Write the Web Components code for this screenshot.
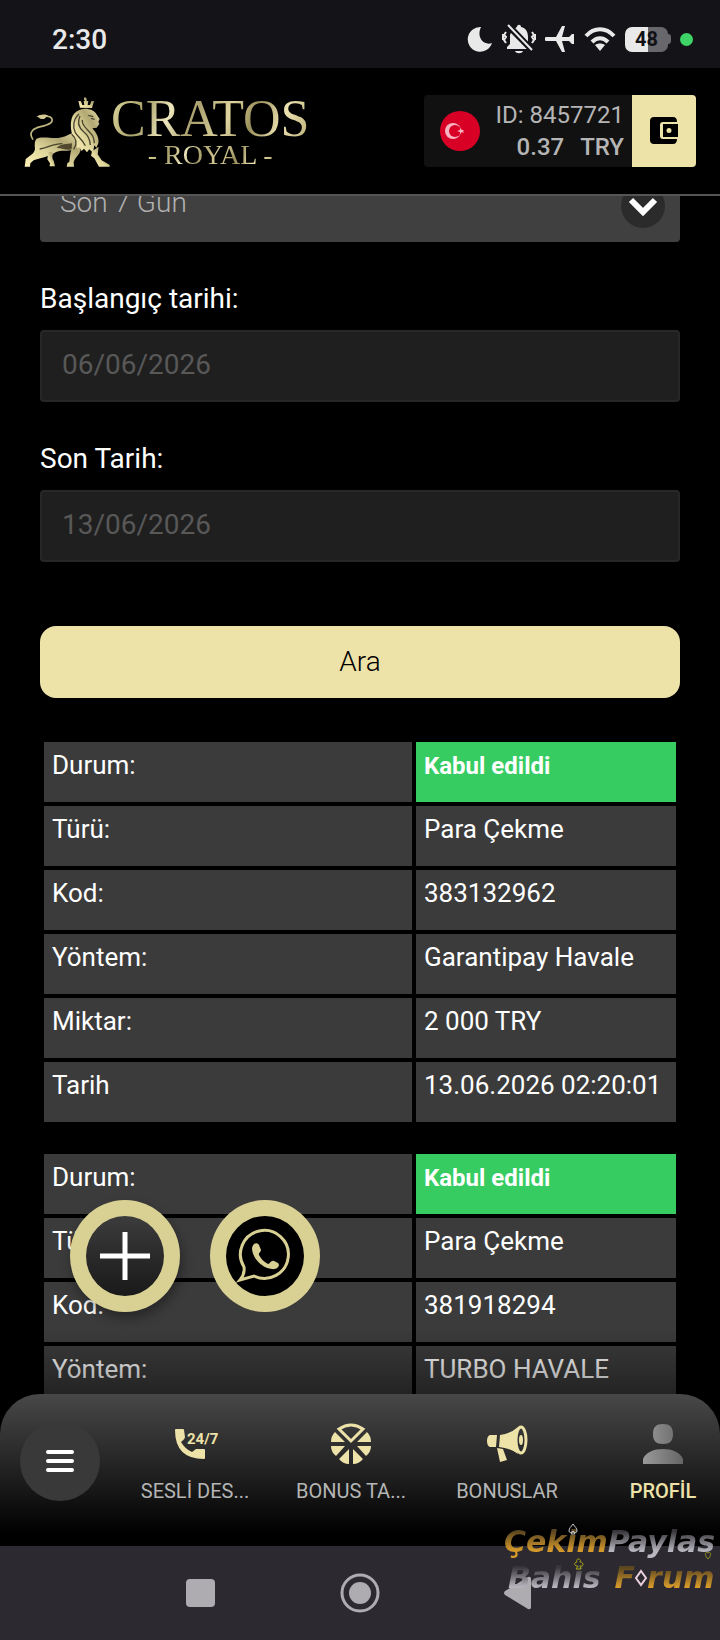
<!DOCTYPE html>
<html lang="tr">
<head>
  <meta charset="utf-8">
  <meta name="viewport" content="width=device-width, initial-scale=1">
  <title>Cratos Royal</title>
  <style>
    body {
      margin: 0;
      background: #000000;
      color: #ffffff;
      font-family: Roboto, "Liberation Sans", sans-serif;
      --gold: #ede2a8;
      --gold-dark: #d9d194;
      --cell: #3b3b3b;
      --green: #36cc62;
      --muted: #b5b5b5;
      --font-nav: 20px;
      --font-small: 24px;
      --font-cell: 26px;
      --font-field: 28px;
    }
  </style>
</head>
<body>
  <app-shell>
    <status-bar slot="top" time="2:30" battery="48"></status-bar>
    <site-header slot="top" user="8457721" amount="0.37" currency="TRY"></site-header>

    <history-filter></history-filter>
    <transaction-card status="Kabul edildi" type="Para Çekme" code="383132962" method="Garantipay Havale" amount="2 000 TRY" date="13.06.2026 02:20:01"></transaction-card>
    <transaction-card status="Kabul edildi" type="Para Çekme" code="381918294" method="TURBO HAVALE" amount="" date=""></transaction-card>

    <floating-actions slot="floating"></floating-actions>

    <bottom-nav slot="bottom">
      <nav-item label="SESLİ DES..." icon="phone"></nav-item>
      <nav-item label="BONUS TA..." icon="wheel"></nav-item>
      <nav-item label="BONUSLAR" icon="horn"></nav-item>
      <nav-item label="PROFİL" icon="user" active></nav-item>
    </bottom-nav>
    <system-nav slot="bottom"></system-nav>
    <forum-mark slot="bottom"></forum-mark>
  </app-shell>

  <script>
    class AppShell extends HTMLElement {
      constructor() {
        super();
        this.attachShadow({ mode: "open" });
      }

      connectedCallback() {
        this.shadowRoot.innerHTML = `
          <style>
            :host {
              display: flex;
              flex-direction: column;
              height: 100vh;
              position: relative;
              overflow: hidden;
            }

            main {
              flex: 1;
              min-height: 0;
              position: relative;
              overflow: hidden;
            }

            /* the list is scrolled a little under the header */
            .content {
              margin-top: -26px;
              padding: 0 40px;
              display: flex;
              flex-direction: column;
              gap: 24px;
            }

            .fade {
              position: absolute;
              left: 0;
              right: 0;
              bottom: 0;
              height: 64px;
              background: linear-gradient(transparent, rgba(0, 0, 0, 0.4));
            }
          </style>
          <slot name="top"></slot>
          <main>
            <div class="content"><slot></slot></div>
            <div class="fade"></div>
            <slot name="floating"></slot>
          </main>
          <slot name="bottom"></slot>
        `;
      }
    }

    class StatusBar extends HTMLElement {
      constructor() {
        super();
        this.attachShadow({ mode: "open" });
      }

      connectedCallback() {
        const time = this.getAttribute("time") || "";
        const battery = this.getAttribute("battery") || "0";

        this.shadowRoot.innerHTML = `
          <style>
            :host {
              display: flex;
              align-items: center;
              justify-content: space-between;
              box-sizing: border-box;
              height: 68px;
              padding: 10px 27px 0 52px;
              background: #141318;
              color: #e9e9ea;
              fill: #e9e9ea;
            }

            time {
              font-size: var(--font-field);
              font-weight: 500;
            }

            .icons {
              display: flex;
              align-items: center;
              gap: 9px;
            }

            svg {
              display: block;
            }

            .battery {
              display: flex;
              align-items: center;
            }

            .level {
              width: 43px;
              height: 25px;
              border-radius: 7px;
              background: linear-gradient(90deg, #e9e9ea 53%, #68676b 53%);
              color: #121116;
              font-size: 20px;
              font-weight: bold;
              line-height: 25px;
              text-align: center;
            }

            .tip {
              width: 3px;
              height: 10px;
              border-radius: 0 4px 4px 0;
              background: #68676b;
            }

            .dot {
              width: 13px;
              height: 13px;
              border-radius: 50%;
              background: #3fd467;
            }
          </style>
          <time>${time}</time>
          <div class="icons">
            <svg width="26" height="26" viewBox="0 0 26 26"><path d="M14 1A12.400 12.400 0 1 0 25 17C17 20 9 12 14 1Z"/></svg>
            <svg width="34" height="30" viewBox="0 0 34 30">
              <path d="M13 5C14 3 15 3 15 3C15 0 19 0 19 3C24 4 26 8 26 13V18L13 5ZM9 9L25 25H5V23L8 20V13C8 11 8 10 9 9ZM13 27H21C20 30 14 30 13 27Z"/>
              <path d="M7 2L30 26" stroke="#141318" stroke-width="6"/>
              <path d="M6 1L30 26M4 8L2 11L4 13L2 16L4 19M1 10V16M30 8L32 11L30 13L32 16L30 19M33 10V16" fill="none" stroke="#e9e9ea" stroke-width="2"/>
            </svg>
            <svg width="30" height="26" viewBox="0 0 30 26"><path d="M1 11H11L17 0H20L17 11H24L27 8H29V18H27L24 15H17L20 26H17L11 15H1C-1 14-1 12 1 11Z"/></svg>
            <svg width="32" height="24" viewBox="0 0 32 24">
              <path d="M2 9C10 0 22 0 30 9M8 15C13 10 19 10 24 15" fill="none" stroke="#e9e9ea" stroke-width="4"/>
              <path d="M11 18C14 16 18 16 21 18L16 24Z"/>
            </svg>
            <div class="battery">
              <div class="level">${battery}</div>
              <div class="tip"></div>
            </div>
            <div class="dot"></div>
          </div>
        `;
      }
    }

    class SiteLogo extends HTMLElement {
      constructor() {
        super();
        this.attachShadow({ mode: "open" });
      }

      connectedCallback() {
        this.shadowRoot.innerHTML = `
          <style>
            :host {
              display: block;
            }

            a {
              display: flex;
              align-items: center;
              text-decoration: none;
              font-family: "Liberation Serif", serif;
              color: #d3c994;
            }

            svg {
              display: block;
            }

            .name {
              display: flex;
              flex-direction: column;
              align-items: center;
            }

            .name span {
              background: linear-gradient(110deg, #ded79d, #a79f68 18%, #eee7bd 30%, #a9a06d 42%, #dfd49f 58%, #998f5b 70%, #eee3b1 84%, #b8ad76);
              -webkit-background-clip: text;
              background-clip: text;
              color: transparent;
            }

            .cratos {
              font-size: 52px;
              line-height: 48px;
            }

            .royal {
              font-size: 28px;
              line-height: 24px;
            }
          </style>
          <a href="#" aria-label="Cratos Royal">
            <svg width="87" height="71" viewBox="15 15 261 213">
              <defs>
                <linearGradient id="coat" x1="0" y1="1" x2="1" y2="0">
                  <stop offset="0" stop-color="#fff2b8"/>
                  <stop offset="0.4" stop-color="#e0d79d"/>
                  <stop offset="0.7" stop-color="#b2a873"/>
                  <stop offset="1" stop-color="#e6dcaa"/>
                </linearGradient>
              </defs>
              <path d="M42 146C27 123 43 112 65 107C91 101 104 94 98 82C92 73 75 75 62 81" fill="none" stroke="#bdb681" stroke-width="5"/>
              <path d="M53 77C62 70 78 68 88 74C78 76 82 84 70 84C62 84 61 78 53 77Z" fill="#d4ca94"/>
              <g fill="url(#coat)">
                <path d="M52 144C68 135 95 143 118 141C138 139 149 130 160 127L190 152L184 180C181 192 167 200 164 214L165 227H143L145 217L151 212C153 200 153 187 157 178C140 181 125 176 111 183C88 199 62 201 44 208L34 217L33 227H17L20 205C30 194 46 190 48 174C48 166 45 153 52 144Z"/>
                <path d="M88 184L106 181C99 191 98 202 104 209L108 226H92L93 217L85 205Z"/>
                <path d="M158 125C152 95 156 66 181 57C202 48 224 58 230 66L242 84L238 92L241 99L233 110L220 112C232 125 241 140 238 157L232 170L226 163L222 185L211 175L204 184L195 173L188 180L183 169L174 171C178 157 162 147 158 125Z"/>
                <path d="M219 181L239 167L236 190L248 208L272 222V227H240L226 202L216 194Z"/>
                <path d="M183 50L178 30L186 31L190 42H196L194 30H198C188 19 205 12 203 30H208L206 42H213L217 31L225 30L219 51Z"/>
              </g>
              <path d="M180 69C163 85 160 108 169 125C176 137 190 145 199 164M183 75C174 94 178 109 194 122C207 132 213 147 214 162M190 87C187 102 203 113 214 126C223 135 226 147 226 157M208 73L223 77M216 82L227 85M62 174C86 171 102 158 130 158M158 130C174 144 176 158 164 175" fill="none" stroke="#48442c" stroke-width="4"/>
              <path d="M113 171C124 158 145 160 159 157L158 175C142 180 128 170 113 171Z" fill="#51492d"/>
            </svg>
            <div class="name">
              <span class="cratos">CRATOS</span>
              <span class="royal">- ROYAL -</span>
            </div>
          </a>
        `;
      }
    }

    class SiteHeader extends HTMLElement {
      constructor() {
        super();
        this.attachShadow({ mode: "open" });
      }

      connectedCallback() {
        const user = this.getAttribute("user") || "";
        const amount = this.getAttribute("amount") || "";
        const currency = this.getAttribute("currency") || "";

        this.shadowRoot.innerHTML = `
          <style>
            :host {
              display: flex;
              align-items: center;
              justify-content: space-between;
              box-sizing: border-box;
              height: 128px;
              padding: 0 24px;
              background: #000000;
              border-bottom: 2px solid #555555;
            }

            .account {
              display: flex;
              align-items: center;
              height: 72px;
              border-radius: 4px;
              overflow: hidden;
              background: #111111;
              color: var(--muted);
              font-size: var(--font-small);
              line-height: 32px;
            }

            .flag {
              margin: 0 16px;
            }

            .balance {
              text-align: right;
              padding-right: 8px;
            }

            .money {
              display: flex;
              justify-content: flex-end;
              gap: 16px;
              font-weight: 500;
            }

            button {
              width: 64px;
              height: 72px;
              padding: 0;
              border: none;
              background: var(--gold);
              display: flex;
              align-items: center;
              justify-content: center;
            }
          </style>
          <site-logo></site-logo>
          <div class="account">
            <svg class="flag" width="40" height="40" viewBox="0 0 40 40">
              <circle cx="20" cy="20" r="20" fill="#d90026"/>
              <circle cx="13" cy="20" r="8" fill="#f6b3c0"/>
              <circle cx="15" cy="20" r="6" fill="#d90026"/>
              <path d="M17 20L20 19L20 17L22 19L24 19L23 20L24 22L22 21L20 23L20 21Z" fill="#f6b3c0"/>
            </svg>
            <div class="balance">
              <div>ID: ${user}</div>
              <div class="money"><span>${amount}</span><span>${currency}</span></div>
            </div>
            <button type="button" aria-label="Cüzdan">
              <svg width="28" height="28" viewBox="0 0 28 28">
                <path d="M4 0H23Q27 0 27 5H13Q10 5 10 8V19Q10 22 13 22H27Q27 27 23 27H4Q0 27 0 23V4Q0 0 4 0Z"/>
                <path fill-rule="evenodd" d="M13 7H28V20H13ZM19 11A2.400 2.400 0 1 0 19 16A2.400 2.400 0 1 0 19 11Z"/>
              </svg>
            </button>
          </div>
        `;
      }
    }

    class HistoryFilter extends HTMLElement {
      constructor() {
        super();
        this.attachShadow({ mode: "open" });
      }

      connectedCallback() {
        this.shadowRoot.innerHTML = `
          <style>
            :host {
              display: block;
              margin-bottom: 16px;
            }

            form {
              display: flex;
              flex-direction: column;
              gap: 36px;
            }

            .period {
              position: relative;
            }

            select, input, button {
              display: block;
              box-sizing: border-box;
              width: 100%;
              height: 72px;
              font-family: inherit;
              font-size: var(--font-field);
            }

            select {
              appearance: none;
              border: none;
              border-radius: 4px;
              padding: 0 80px 8px 20px;
              background: #404040;
              color: #b0b0b0;
              font-weight: 300;
            }

            .arrow {
              position: absolute;
              right: 15px;
              top: 14px;
              pointer-events: none;
            }

            label {
              display: block;
              margin-bottom: 10px;
              font-size: var(--font-field);
              line-height: 42px;
            }

            input {
              border: 2px solid #272727;
              border-radius: 4px;
              padding: 0 20px 4px;
              background: #1f1f1f;
              color: #585858;
            }

            button {
              margin-top: 28px;
              padding: 0 0 2px;
              border: none;
              border-radius: 16px;
              background: var(--gold);
              color: #000000;
              font-weight: 300;
            }
          </style>
          <form>
            <div class="period">
              <select aria-label="Dönem"><option>Son 7 Gün</option></select>
              <svg class="arrow" width="44" height="44" viewBox="0 0 44 44">
                <circle cx="22" cy="22" r="22" fill="#2b2b2b"/>
                <path d="M10 16L22 28L34 16" fill="none" stroke="#ffffff" stroke-width="6"/>
              </svg>
            </div>
            <div>
              <label for="from">Başlangıç tarihi:</label>
              <input id="from" type="text" value="06/06/2026">
            </div>
            <div>
              <label for="to">Son Tarih:</label>
              <input id="to" type="text" value="13/06/2026">
            </div>
            <button type="button">Ara</button>
          </form>
        `;
      }
    }

    class TransactionCard extends HTMLElement {
      constructor() {
        super();
        this.attachShadow({ mode: "open" });
      }

      connectedCallback() {
        const rows = [
          ["Durum:", "status"],
          ["Türü:", "type"],
          ["Kod:", "code"],
          ["Yöntem:", "method"],
          ["Miktar:", "amount"],
          ["Tarih", "date"]
        ].filter(([, key]) => this.getAttribute(key));

        this.shadowRoot.innerHTML = `
          <style>
            :host {
              display: block;
            }

            table {
              width: 100%;
              table-layout: fixed;
              border-collapse: separate;
              border-spacing: 4px;
            }

            th, td {
              box-sizing: border-box;
              height: 60px;
              padding: 8px;
              background: var(--cell);
              font-size: var(--font-cell);
              font-weight: normal;
              line-height: 30px;
              text-align: left;
              vertical-align: top;
              white-space: nowrap;
            }

            td {
              width: 260px;
            }

            .status {
              background: var(--green);
              font-size: var(--font-small);
              font-weight: bold;
              line-height: 32px;
            }
          </style>
          <table>
            ${rows.map(([label, key]) => `
              <tr>
                <th scope="row">${label}</th>
                <td class="${key}">${this.getAttribute(key)}</td>
              </tr>
            `).join("")}
          </table>
        `;
      }
    }

    class FloatingActions extends HTMLElement {
      constructor() {
        super();
        this.attachShadow({ mode: "open" });
      }

      connectedCallback() {
        this.shadowRoot.innerHTML = `
          <style>
            :host {
              position: absolute;
              left: 70px;
              bottom: 82px;
              display: flex;
              gap: 30px;
            }

            button, a {
              box-sizing: border-box;
              width: 110px;
              height: 112px;
              padding: 0;
              border: 16px solid var(--gold-dark);
              border-radius: 50%;
              display: flex;
              align-items: center;
              justify-content: center;
            }

            button {
              background: linear-gradient(#3c3c3c, #191919);
              box-shadow: 2px 6px 12px rgba(0, 0, 0, 0.35);
            }

            a {
              background: #000000;
            }

            svg {
              overflow: visible;
            }
          </style>
          <button type="button" aria-label="Ekle">
            <svg width="50" height="48" viewBox="0 0 50 48"><path d="M0 24H50M25 0V48" stroke="#ffffff" stroke-width="5"/></svg>
          </button>
          <a href="#" aria-label="WhatsApp">
            <svg width="52" height="52" viewBox="0 0 52 52">
              <path d="M5 37A24 24 0 1 1 15 46L1 50Q6 44 5 37Z" fill="none" stroke="#d9d194" stroke-width="3"/>
              <path d="M13 18C14 13 18 12 20 15L22 20C22 22 19 23 20 25C22 29 25 32 29 34C31 34 32 30 35 31L39 33C42 36 37 40 33 39C23 38 13 28 13 18Z" fill="#d9d194"/>
            </svg>
          </a>
        `;
      }
    }

    class BottomNav extends HTMLElement {
      constructor() {
        super();
        this.attachShadow({ mode: "open" });
      }

      connectedCallback() {
        this.shadowRoot.innerHTML = `
          <style>
            :host {
              display: block;
            }

            nav {
              display: flex;
              box-sizing: border-box;
              height: 152px;
              padding: 27px 0 0 20px;
              border-radius: 40px 40px 0 0;
              background: linear-gradient(#484848, #222222 50%, #000000 92%);
              overflow: hidden;
            }

            button {
              flex: none;
              width: 80px;
              height: 80px;
              padding: 0;
              margin-right: 17px;
              border: none;
              border-radius: 50%;
              background: #393939;
              display: flex;
              align-items: center;
              justify-content: center;
            }

            .items {
              display: flex;
              flex: 1;
              min-width: 0;
            }
          </style>
          <nav>
            <button type="button" aria-label="Menü">
              <svg width="28" height="22" viewBox="0 0 28 22"><path d="M2 2H26M2 11H26M2 20H26" stroke="#ffffff" stroke-width="4" stroke-linecap="round"/></svg>
            </button>
            <div class="items"><slot></slot></div>
          </nav>
        `;
      }
    }

    class NavItem extends HTMLElement {
      constructor() {
        super();
        this.attachShadow({ mode: "open" });
      }

      connectedCallback() {
        const label = this.getAttribute("label") || "";
        const icons = {
          phone: `
            <path d="M0 6Q0 5 1 5H8Q9 5 9 6L10 13Q10 15 6 18Q10 25 17 28L21 25H29Q30 25 30 26V34Q30 35 29 35Q0 35 0 6Z"/>
            <text x="12" y="20" font-size="15" font-weight="bold">24/7</text>`,
          wheel: `
            <path d="M8 5Q20-3 32 5L20 17Z" fill="none" stroke="#ede2a8" stroke-width="3"/>
            <path d="M4 8L14 18H0Q0 12 4 8ZM36 8L26 18H40Q40 12 36 8ZM0 22H14L5 32Q0 28 0 22ZM40 22H26L35 32Q40 28 40 22ZM8 35L18 25V40Q12 40 8 35ZM32 35L22 25V40Q28 40 32 35Z"/>`,
          horn: `
            <path d="M3 11H10L9 23H3Q0 22 0 17Q0 12 3 11ZM13 11Q23 10 31 3Q27 17 31 30Q23 24 12 23ZM10 24L16 25L20 36L13 38Z"/>
            <ellipse cx="34" cy="16" rx="5" ry="13" fill="none" stroke="#ede2a8" stroke-width="3"/>
            <ellipse cx="34" cy="16" rx="2" ry="5"/>`,
          user: `
            <defs><linearGradient id="shade"><stop stop-color="#999999"/><stop offset="1" stop-color="#666666"/></linearGradient></defs>
            <path fill="url(#shade)" d="M20 0C27 0 30 3 30 10C30 17 27 20 20 20C13 20 10 17 10 10C10 3 13 0 20 0ZM0 40V35C3 28 11 25 20 25C29 25 37 28 40 35V40Z"/>`
        };

        this.shadowRoot.innerHTML = `
          <style>
            :host {
              display: block;
              flex: 0 0 156px;
              color: var(--muted);
            }

            :host([active]) {
              color: var(--gold);
              font-weight: 500;
            }

            a {
              display: flex;
              flex-direction: column;
              align-items: center;
              gap: 13px;
              padding-top: 3px;
              color: inherit;
              font-size: var(--font-nav);
              line-height: 28px;
              text-decoration: none;
              white-space: nowrap;
            }

            svg {
              fill: #ede2a8;
              overflow: visible;
            }
          </style>
          <a href="#">
            <svg width="40" height="40" viewBox="0 0 40 40">${icons[this.getAttribute("icon")] || ""}</svg>
            <span>${label}</span>
          </a>
        `;
      }
    }

    class SystemNav extends HTMLElement {
      constructor() {
        super();
        this.attachShadow({ mode: "open" });
      }

      connectedCallback() {
        this.shadowRoot.innerHTML = `
          <style>
            :host {
              display: flex;
              align-items: center;
              justify-content: space-between;
              box-sizing: border-box;
              height: 94px;
              padding: 0 25%;
              background: #2c2930;
            }

            button {
              padding: 0;
              border: none;
              background: none;
            }

            svg {
              display: block;
              fill: #aeacb0;
            }
          </style>
          <button type="button" aria-label="Son uygulamalar">
            <svg width="40" height="40" viewBox="0 0 40 40"><rect x="6" y="6" width="29" height="28" rx="4"/></svg>
          </button>
          <button type="button" aria-label="Ana ekran">
            <svg width="40" height="40" viewBox="0 0 40 40"><circle cx="20" cy="20" r="18" fill="none" stroke="#aeacb0" stroke-width="3"/><circle cx="20" cy="20" r="11"/></svg>
          </button>
          <button type="button" aria-label="Geri">
            <svg width="40" height="40" viewBox="0 0 40 40"><path d="M5 18L28 4Q31 3 31 6V34Q31 37 28 36L5 22Q3 20 5 18Z"/></svg>
          </button>
        `;
      }
    }

    class ForumMark extends HTMLElement {
      constructor() {
        super();
        this.attachShadow({ mode: "open" });
      }

      connectedCallback() {
        this.shadowRoot.innerHTML = `
          <style>
            :host {
              position: absolute;
              right: 0;
              bottom: 44px;
              width: 216px;
              font: italic bold 30px/36px "DejaVu Sans", sans-serif;
              pointer-events: none;
            }

            .line {
              display: flex;
              align-items: center;
            }

            .second {
              gap: 14px;
              padding-left: 4px;
            }

            .gold, .silver {
              background: linear-gradient(#59451f 20%, #d79b2b 75%);
              -webkit-background-clip: text;
              background-clip: text;
              color: transparent;
            }

            .silver {
              background-image: linear-gradient(#38363b 20%, #b8b6be 75%);
            }

            .word {
              display: flex;
              align-items: center;
            }

            .suits {
              position: absolute;
              left: 0;
              top: 0;
              width: 216px;
              height: 76px;
            }

            svg {
              fill: none;
              stroke-width: 1;
              overflow: visible;
            }
          </style>
          <div class="line"><span class="gold">Çekim</span><span class="silver">Paylas</span></div>
          <div class="line second">
            <span class="silver">Bahis</span>
            <span class="word">
              <span class="gold">F</span>
              <svg width="12" height="18" viewBox="0 0 12 18"><path d="M6 2L11 9L6 16L1 9Z" stroke="#ead0de" stroke-width="2"/></svg>
              <span class="gold">rum</span>
            </span>
          </div>
          <svg class="suits" viewBox="0 0 216 76">
            <path d="M69 0C67 3 65 4 65 7C65 9 68 9 69 7L67 10H71L69 7C70 9 73 9 73 7C73 4 71 3 69 0Z" stroke="#c8c8cc"/>
            <path d="M73 42C70 42 70 38 73 38C71 34 78 34 76 38C80 38 80 43 76 42L77 45H72L74 42Z" stroke="#a6a318"/>
            <path d="M204 35C200 31 201 27 204 29C207 27 208 31 204 35Z" stroke="#8c8a20"/>
          </svg>
        `;
      }
    }

    customElements.define("app-shell", AppShell);
    customElements.define("status-bar", StatusBar);
    customElements.define("site-logo", SiteLogo);
    customElements.define("site-header", SiteHeader);
    customElements.define("history-filter", HistoryFilter);
    customElements.define("transaction-card", TransactionCard);
    customElements.define("floating-actions", FloatingActions);
    customElements.define("bottom-nav", BottomNav);
    customElements.define("nav-item", NavItem);
    customElements.define("system-nav", SystemNav);
    customElements.define("forum-mark", ForumMark);
  </script>
</body>
</html>
